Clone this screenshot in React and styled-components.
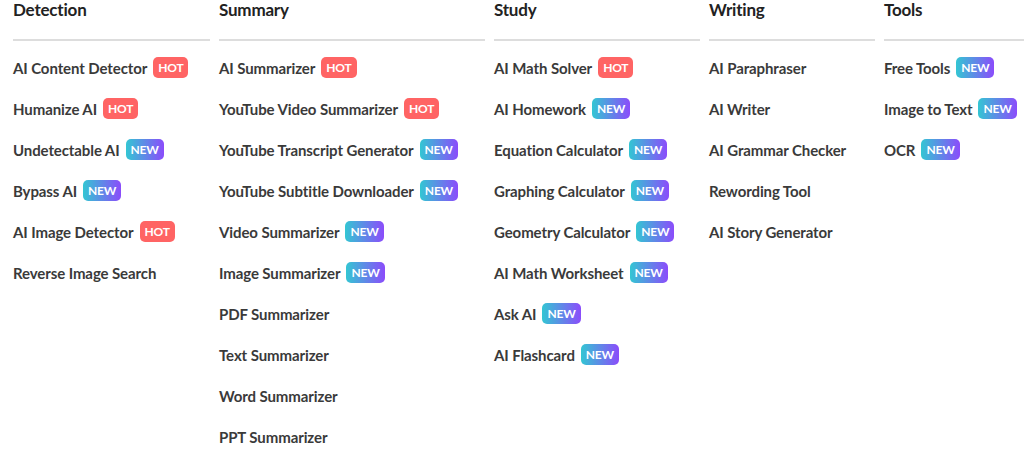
import styled, { createGlobalStyle } from "styled-components";

const GlobalStyle = createGlobalStyle`
  body {
    margin: 0;
    background: #fff;
    font-family: "Lato", "Noto Sans", sans-serif;
  }
`;

const Menu = styled.div`
  display: grid;
  grid-template-columns: 197px 266px 206px 166px 1fr;
  column-gap: 9px;
  padding-left: 13px;
  height: 456px;
  overflow: hidden;
`;

const Column = styled.div`
  display: flex;
  flex-direction: column;
`;

const Heading = styled.h3`
  margin: 0;
  height: 20px;
  line-height: 20px;
  font-size: 17px;
  font-weight: 700;
  letter-spacing: -0.2px;
  color: #222;
  padding-bottom: 19px;
  border-bottom: 2px solid #ddd;
`;

const List = styled.ul`
  list-style: none;
  margin: 0;
  padding: 6px 0 0;
`;

const Item = styled.li`
  display: flex;
  align-items: center;
  gap: 6px;
  height: 41px;
  font-size: 15px;
  font-weight: 700;
  letter-spacing: -0.1px;
  color: #3a3a3a;
  white-space: nowrap;
`;

const Badge = styled.span`
  display: inline-flex;
  align-items: center;
  justify-content: center;
  height: 21px;
  padding: 0 5px;
  border-radius: 5px;
  font-size: 12px;
  font-weight: 700;
  letter-spacing: -0.2px;
  color: #fff;
  background: ${(p) =>
    p.$kind === "hot"
      ? "#ff6464"
      : "linear-gradient(90deg, #33c6d3 0%, #8b4cfb 100%)"};
`;

const columns = [
  {
    title: "Detection",
    items: [
      ["AI Content Detector", "hot"],
      ["Humanize AI", "hot"],
      ["Undetectable AI", "new"],
      ["Bypass AI", "new"],
      ["AI Image Detector", "hot"],
      ["Reverse Image Search"],
    ],
  },
  {
    title: "Summary",
    items: [
      ["AI Summarizer", "hot"],
      ["YouTube Video Summarizer", "hot"],
      ["YouTube Transcript Generator", "new"],
      ["YouTube Subtitle Downloader", "new"],
      ["Video Summarizer", "new"],
      ["Image Summarizer", "new"],
      ["PDF Summarizer"],
      ["Text Summarizer"],
      ["Word Summarizer"],
      ["PPT Summarizer"],
    ],
  },
  {
    title: "Study",
    items: [
      ["AI Math Solver", "hot"],
      ["AI Homework", "new"],
      ["Equation Calculator", "new"],
      ["Graphing Calculator", "new"],
      ["Geometry Calculator", "new"],
      ["AI Math Worksheet", "new"],
      ["Ask AI", "new"],
      ["AI Flashcard", "new"],
    ],
  },
  {
    title: "Writing",
    items: [
      ["AI Paraphraser"],
      ["AI Writer"],
      ["AI Grammar Checker"],
      ["Rewording Tool"],
      ["AI Story Generator"],
    ],
  },
  {
    title: "Tools",
    items: [
      ["Free Tools", "new"],
      ["Image to Text", "new"],
      ["OCR", "new"],
    ],
  },
];

export default function App() {
  return (
    <>
      <GlobalStyle />
      <Menu>
        {columns.map((col) => (
          <Column key={col.title}>
            <Heading>{col.title}</Heading>
            <List>
              {col.items.map(([label, tag]) => (
                <Item key={label}>
                  {label}
                  {tag && <Badge $kind={tag}>{tag.toUpperCase()}</Badge>}
                </Item>
              ))}
            </List>
          </Column>
        ))}
      </Menu>
    </>
  );
}
